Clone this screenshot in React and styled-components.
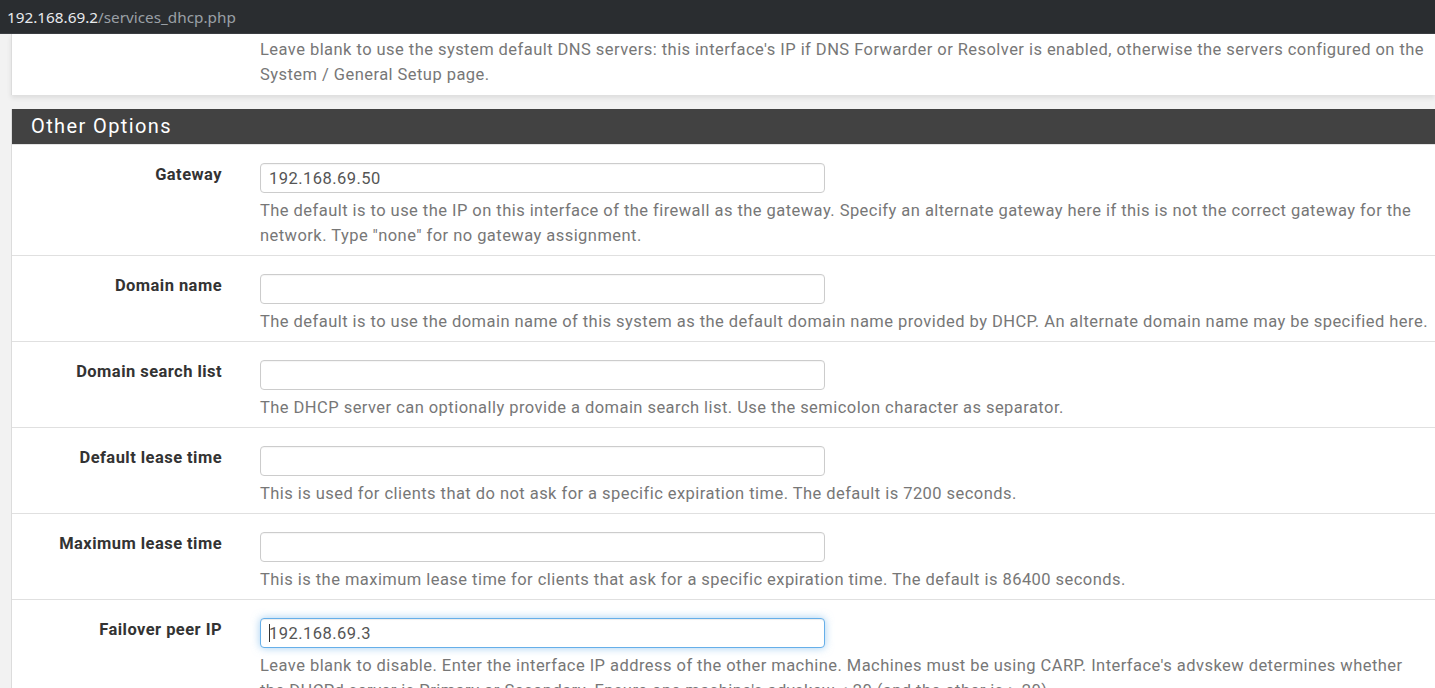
import React from "react";
import styled, { createGlobalStyle } from "styled-components";

const GlobalStyle = createGlobalStyle`
  html, body {
    margin: 0;
    padding: 0;
    background: #f2f2f2;
    overflow: hidden;
  }
  body {
    font-family: Roboto, "Liberation Sans", sans-serif;
    font-size: 16.5px;
    letter-spacing: 0.45px;
    color: #333;
  }
`;

const Page = styled.div`
  width: 1435px;
  height: 688px;
  overflow: hidden;
  display: flex;
  flex-direction: column;
`;

const UrlBar = styled.div`
  height: 33px;
  flex-shrink: 0;
  background: #2a2d30;
  border-bottom: 1px solid #3b3e42;
  display: flex;
  align-items: center;
  padding-left: 7px;
  font-family: "Noto Sans", "DejaVu Sans", sans-serif;
  font-size: 15.3px;
  letter-spacing: 0;
  color: #e8eaed;
  span {
    color: #9aa0a6;
  }
`;

const Main = styled.div`
  padding-left: 11px;
  display: flex;
  flex-direction: column;
  gap: 14px;
`;

const Panel = styled.div`
  background: #fff;
  border-left: 1px solid #dcdcdc;
  box-shadow: ${(p) => (p.shadow ? "0 3px 5px rgba(0, 0, 0, 0.09)" : "none")};
`;

const PanelHeading = styled.div`
  background: #424242;
  height: 35px;
  line-height: 35px;
  padding-left: 19px;
  color: #fff;
  font-size: 20px;
  font-weight: 400;
  letter-spacing: 1.4px;
  border-bottom: 1px solid #e3e3e3;
`;

const Row = styled.div`
  display: grid;
  grid-template-columns: 210px 1fr;
  column-gap: 38px;
  padding: ${(p) => (p.top ? "3px 6px 8px 0" : "18px 6px 7px 0")};
  border-top: ${(p) => (p.first || p.top ? "none" : "1px solid #e0e0e0")};
`;

const Label = styled.div`
  text-align: right;
  font-weight: 700;
  line-height: 20px;
  padding-top: 2px;
  color: #333;
`;

const Field = styled.div`
  min-width: 0;
`;

const InputWrap = styled.div`
  position: relative;
  width: 565px;
`;

const Input = styled.input`
  box-sizing: border-box;
  display: block;
  width: 565px;
  height: 30px;
  padding: 0 8px;
  font-family: Roboto, "Liberation Sans", sans-serif;
  font-size: 16.5px;
  letter-spacing: 0.45px;
  color: #555;
  background: #fff;
  border: 1px solid ${(p) => (p.focused ? "#66afe9" : "#cccccc")};
  border-radius: 4px;
  outline: none;
  box-shadow: ${(p) =>
    p.focused
      ? "inset 0 1px 1px rgba(0,0,0,.075), 0 0 8px rgba(102,175,233,.6)"
      : "inset 0 1px 1px rgba(0,0,0,.04)"};
`;

const Caret = styled.div`
  position: absolute;
  left: 9px;
  top: 6px;
  width: 1px;
  height: 18px;
  background: #333;
`;

const Help = styled.div`
  color: #777;
  line-height: 25px;
  margin-top: ${(p) => (p.top ? "0" : "5px")};
`;

const rows = [
  {
    label: "Gateway",
    value: "192.168.69.50",
    help:
      'The default is to use the IP on this interface of the firewall as the gateway. Specify an alternate gateway here if this is not the correct gateway for the network. Type "none" for no gateway assignment.',
  },
  {
    label: "Domain name",
    value: "",
    help:
      "The default is to use the domain name of this system as the default domain name provided by DHCP. An alternate domain name may be specified here.",
  },
  {
    label: "Domain search list",
    value: "",
    help:
      "The DHCP server can optionally provide a domain search list. Use the semicolon character as separator.",
  },
  {
    label: "Default lease time",
    value: "",
    help:
      "This is used for clients that do not ask for a specific expiration time. The default is 7200 seconds.",
  },
  {
    label: "Maximum lease time",
    value: "",
    help:
      "This is the maximum lease time for clients that ask for a specific expiration time. The default is 86400 seconds.",
  },
  {
    label: "Failover peer IP",
    value: "192.168.69.3",
    focused: true,
    help:
      "Leave blank to disable. Enter the interface IP address of the other machine. Machines must be using CARP. Interface's advskew determines whether the DHCPd server is Primary or Secondary. Ensure one machine's advskew < 20 (and the other is > 20).",
  },
];

export default function App() {
  return (
    <Page>
      <GlobalStyle />
      <UrlBar>
        192.168.69.2<span>/services_dhcp.php</span>
      </UrlBar>
      <Main>
        <Panel shadow>
          <Row top>
            <div />
            <Help top>
              Leave blank to use the system default DNS servers: this
              interface's IP if DNS Forwarder or Resolver is enabled, otherwise
              the servers configured on the System / General Setup page.
            </Help>
          </Row>
        </Panel>
        <Panel>
          <PanelHeading>Other Options</PanelHeading>
          {rows.map((r, i) => (
            <Row key={r.label} first={i === 0}>
              <Label>{r.label}</Label>
              <Field>
                <InputWrap>
                  <Input
                    type="text"
                    defaultValue={r.value}
                    focused={r.focused}
                    readOnly
                  />
                  {r.focused && <Caret />}
                </InputWrap>
                <Help>{r.help}</Help>
              </Field>
            </Row>
          ))}
        </Panel>
      </Main>
    </Page>
  );
}
